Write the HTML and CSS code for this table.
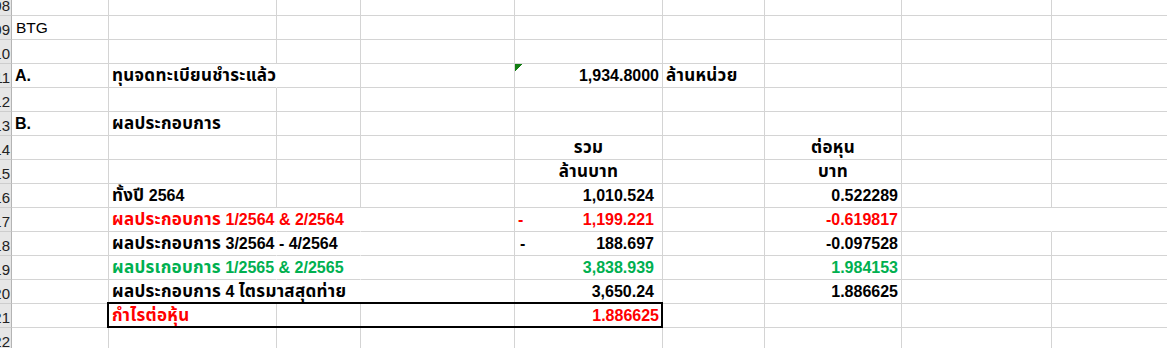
FILE: index.html
```html
<!DOCTYPE html>
<html lang="th">
<head>
<meta charset="utf-8">
<title>BTG</title>
<link rel="stylesheet" href="styles.css">
</head>
<body>
<div class="sheet">
  <div class="row first">
    <div class="rh">108</div><div class="c"></div><div class="c"></div><div class="c"></div><div class="c"></div><div class="c"></div><div class="c"></div><div class="c"></div><div class="c"></div><div class="c last"></div>
  </div>
  <div class="row">
    <div class="rh">109</div><div class="c reg">BTG</div><div class="c"></div><div class="c"></div><div class="c"></div><div class="c"></div><div class="c"></div><div class="c"></div><div class="c"></div><div class="c last"></div>
  </div>
  <div class="row">
    <div class="rh">110</div><div class="c"></div><div class="c"></div><div class="c"></div><div class="c"></div><div class="c"></div><div class="c"></div><div class="c"></div><div class="c"></div><div class="c last"></div>
  </div>
  <div class="row">
    <div class="rh">111</div><div class="c">A.</div><div class="c open"><span class="th">ทุนจดทะเบียนชำระแล้ว</span></div><div class="c"></div><div class="c"></div><div class="c num flag">1,934.8000</div><div class="c"><span class="th">ล้านหน่วย</span></div><div class="c"></div><div class="c"></div><div class="c last"></div>
  </div>
  <div class="row">
    <div class="rh">112</div><div class="c"></div><div class="c"></div><div class="c"></div><div class="c"></div><div class="c"></div><div class="c"></div><div class="c"></div><div class="c"></div><div class="c last"></div>
  </div>
  <div class="row">
    <div class="rh">113</div><div class="c">B.</div><div class="c"><span class="th">ผลประกอบการ</span></div><div class="c"></div><div class="c"></div><div class="c"></div><div class="c"></div><div class="c"></div><div class="c"></div><div class="c last"></div>
  </div>
  <div class="row">
    <div class="rh">114</div><div class="c"></div><div class="c"></div><div class="c"></div><div class="c"></div><div class="c mid"><span class="th">รวม</span></div><div class="c"></div><div class="c mid"><span class="th">ต่อหุน</span></div><div class="c"></div><div class="c last"></div>
  </div>
  <div class="row">
    <div class="rh">115</div><div class="c"></div><div class="c"></div><div class="c"></div><div class="c"></div><div class="c mid"><span class="th">ล้านบาท</span></div><div class="c"></div><div class="c mid"><span class="th">บาท</span></div><div class="c"></div><div class="c last"></div>
  </div>
  <div class="row">
    <div class="rh">116</div><div class="c"></div><div class="c"><span class="th">ทั้งปี</span> 2564</div><div class="c"></div><div class="c"></div><div class="c acct"><span></span><span>1,010.524</span></div><div class="c"></div><div class="c num">0.522289</div><div class="c"></div><div class="c last"></div>
  </div>
  <div class="row red">
    <div class="rh">117</div><div class="c"></div><div class="c open"><span class="th">ผลประกอบการ</span> 1/2564 &amp; 2/2564</div><div class="c open"></div><div class="c"></div><div class="c acct"><span>-</span><span>1,199.221</span></div><div class="c"></div><div class="c num">-0.619817</div><div class="c open"></div><div class="c last"></div>
  </div>
  <div class="row">
    <div class="rh">118</div><div class="c"></div><div class="c open"><span class="th">ผลประกอบการ</span> 3/2564 - 4/2564</div><div class="c open"></div><div class="c"></div><div class="c acct"><span class="dash">-</span><span>188.697</span></div><div class="c"></div><div class="c num">-0.097528</div><div class="c"></div><div class="c last"></div>
  </div>
  <div class="row green">
    <div class="rh">119</div><div class="c"></div><div class="c open"><span class="th">ผลปรเกอบการ</span> 1/2565 &amp; 2/2565</div><div class="c open"></div><div class="c"></div><div class="c acct"><span></span><span>3,838.939</span></div><div class="c"></div><div class="c num">1.984153</div><div class="c"></div><div class="c last"></div>
  </div>
  <div class="row">
    <div class="rh">120</div><div class="c"></div><div class="c open"><span class="th">ผลประกอบการ</span> 4 <span class="th">ไตรมาสสุดท่าย</span></div><div class="c open"></div><div class="c"></div><div class="c acct"><span></span><span>3,650.24</span></div><div class="c"></div><div class="c num">1.886625</div><div class="c"></div><div class="c last"></div>
  </div>
  <div class="row">
    <div class="rh">121</div><div class="c"></div><div class="c red boxed"><span class="th">กำไรต่อหุ้น</span><div class="box"></div></div><div class="c"></div><div class="c"></div><div class="c num red">1.886625</div><div class="c"></div><div class="c"></div><div class="c"></div><div class="c last"></div>
  </div>
  <div class="row">
    <div class="rh">122</div><div class="c"></div><div class="c"></div><div class="c"></div><div class="c"></div><div class="c"></div><div class="c"></div><div class="c"></div><div class="c"></div><div class="c last"></div>
  </div>
</div>
</body>
</html>
```
FILE: styles.css
```css
html, body {
  margin: 0;
  padding: 0;
  background: #ffffff;
}
body {
  width: 1167px;
  height: 348px;
  overflow: hidden;
}
.sheet {
  display: grid;
  grid-template-columns: 12px 97px 168px 84px 154px 148px 102px 137px 150px 1fr;
  grid-template-rows: 16px repeat(14, 24px);
  font-family: "Liberation Sans", Arial, Tahoma, "Noto Sans Thai", "Noto Sans", "DejaVu Sans", sans-serif;
  font-size: 16px;
  font-weight: bold;
  color: #000;
}
.row {
  display: contents;
}
.c {
  box-sizing: border-box;
  border-right: 1px solid #d4d4d4;
  border-bottom: 1px solid #d4d4d4;
  padding: 0 3px;
  line-height: 23px;
  white-space: nowrap;
  min-width: 0;
}
.th {
  font-size: 17px;
  letter-spacing: 0.3px;
}
.first .c {
  line-height: 15px;
}
.c.last {
  border-right: none;
}
.c.open {
  border-right-color: transparent;
}
.reg {
  font-weight: normal;
  font-size: 15.5px;
  padding-left: 4px;
}
.num {
  text-align: right;
}
.mid {
  text-align: center;
}
.acct {
  display: flex;
  justify-content: space-between;
  padding-right: 8px;
}
.acct .dash {
  padding-left: 2px;
}
.flag {
  background: linear-gradient(to bottom right, #127d12 50%, transparent 50%) no-repeat 0 0 / 7px 7px;
}
.red {
  color: #ff0000;
}
.green {
  color: #00b050;
}
.rh {
  box-sizing: border-box;
  background: #e6e6e6;
  border-right: 1px solid #b4b4b4;
  border-bottom: 1px solid #cdcdcd;
  overflow: hidden;
  white-space: nowrap;
  text-align: right;
  direction: rtl;
  padding: 5px 1px 0 0;
  font-weight: normal;
  font-size: 15px;
  line-height: 17px;
  color: #222;
}
.first .rh {
  padding-top: 0;
  line-height: 12px;
}
.boxed {
  position: relative;
}
.box {
  position: absolute;
  left: -2px;
  top: -2px;
  width: 556px;
  height: 26px;
  box-sizing: border-box;
  border: 2px solid #000;
  pointer-events: none;
}
```
